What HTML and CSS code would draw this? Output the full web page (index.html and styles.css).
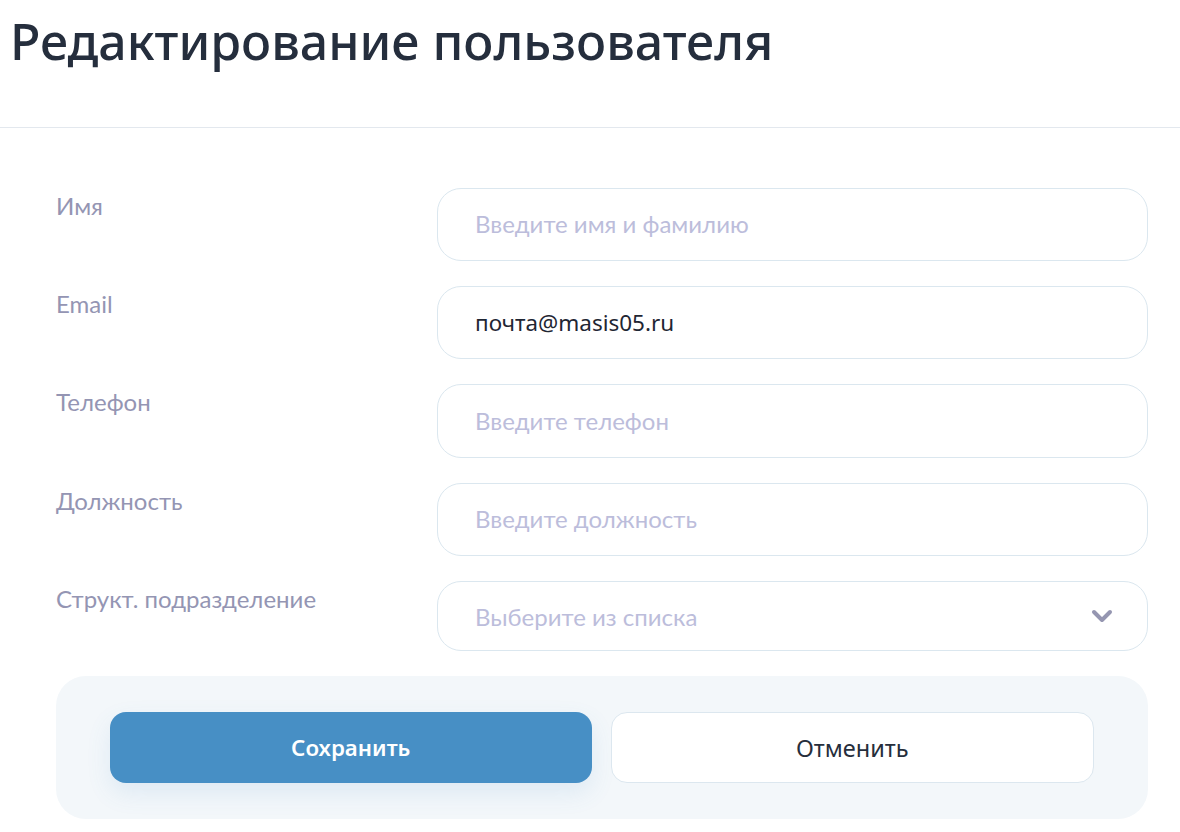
FILE: index.html
```html
<!DOCTYPE html>
<html lang="ru">
    <head>
        <meta charset="UTF-8">
        <title>Редактирование пользователя</title>
        <link rel="stylesheet" href="styles.css">
    </head>
    <body>
        <header class="page-head">
            <h1 class="page-title">Редактирование пользователя</h1>
        </header>

        <form class="user-form">
            <div class="form-row">
                <label class="form-label" for="name">Имя</label>
                <input class="form-input" id="name" type="text" placeholder="Введите имя и фамилию">
            </div>
            <div class="form-row">
                <label class="form-label" for="email">Email</label>
                <input class="form-input" id="email" type="text" value="почта@masis05.ru">
            </div>
            <div class="form-row">
                <label class="form-label" for="phone">Телефон</label>
                <input class="form-input tall" id="phone" type="text" placeholder="Введите телефон">
            </div>
            <div class="form-row">
                <label class="form-label" for="post">Должность</label>
                <input class="form-input" id="post" type="text" placeholder="Введите должность">
            </div>
            <div class="form-row">
                <label class="form-label" for="dept">Структ. подразделение</label>
                <div class="form-select" id="dept">
                    <span class="select-text">Выберите из списка</span>
                    <svg class="select-arrow" width="22" height="16" viewBox="0 0 22 16">
                        <path d="M3 4 L11 12 L19 4" fill="none" stroke="#9596b1" stroke-width="4" stroke-linecap="round" stroke-linejoin="round"/>
                    </svg>
                </div>
            </div>

            <div class="form-actions">
                <button type="button" class="btn btn-save">Сохранить</button>
                <button type="button" class="btn btn-cancel">Отменить</button>
            </div>
        </form>
    </body>
</html>
```

FILE: styles.css
```css
* {
    box-sizing: border-box;
}

body {
    margin: 0;
    background: #fff;
    font-family: "Lato", "Noto Sans", sans-serif;
}

.page-head {
    height: 128px;
    padding: 9px 10px 0;
    border-bottom: 1px solid #e3e8ee;
}

.page-title {
    margin: 0;
    font-family: "Noto Sans", sans-serif;
    font-size: 50px;
    font-weight: 500;
    line-height: 64px;
    color: #252e3d;
}

.user-form {
    width: 1092px;
    margin: 60px 0 0 56px;
}

.form-row {
    display: grid;
    grid-template-columns: 381px 711px;
    margin-bottom: 25px;
}

.form-label {
    padding-top: 4px;
    font-size: 24px;
    line-height: 28px;
    color: #9495b3;
}

.form-input,
.form-select {
    height: 73px;
    padding: 0 37px;
    border: 1px solid #dbe7ef;
    border-radius: 24px;
    background: #fff;
    font-family: "Noto Sans", sans-serif;
    font-size: 22.5px;
    color: #1f2633;
    outline: none;
}

.form-input.tall {
    height: 74px;
}

.form-input::placeholder {
    font-family: "Lato", sans-serif;
    font-size: 24px;
    color: #bcbddb;
}

.form-select {
    height: 70px;
    display: flex;
    align-items: center;
    justify-content: space-between;
    padding-right: 34px;
}

.select-text {
    font-family: "Lato", sans-serif;
    font-size: 24px;
    color: #bcbddb;
}

.form-actions {
    display: flex;
    gap: 19px;
    padding: 36px 54px;
    border-radius: 30px;
    background: #f3f7fa;
}

.btn {
    flex: 1;
    height: 71px;
    border-radius: 16px;
    font-family: "Noto Sans", sans-serif;
    font-size: 22.3px;
    cursor: pointer;
}

.btn-save {
    border: none;
    background: #478fc5;
    color: #fff;
    font-weight: 600;
    box-shadow: 0 10px 24px rgba(71, 143, 197, 0.12);
}

.btn-cancel {
    border: 1px solid #dce7ef;
    background: #fff;
    color: #262e3c;
    font-size: 23.5px;
}
```
